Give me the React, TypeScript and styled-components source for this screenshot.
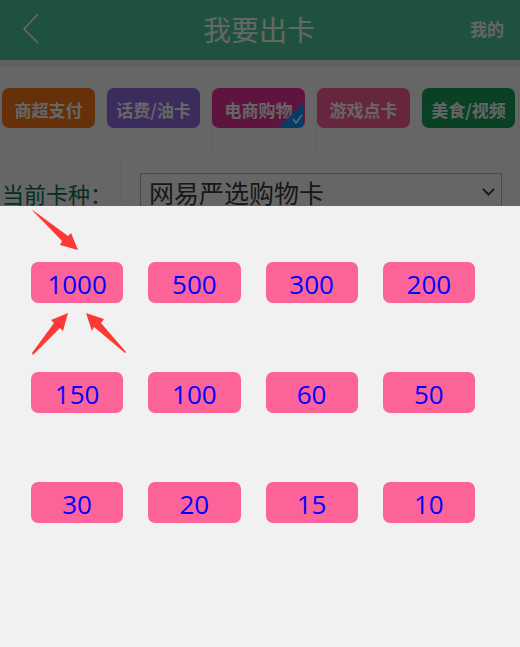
import React, { useState } from "react";
import styled, { createGlobalStyle } from "styled-components";

const GlobalStyle = createGlobalStyle`
  *, *::before, *::after { box-sizing: border-box; }
  body {
    margin: 0;
    background: #fff;
    font-family: "Open Sans", "Noto Sans CJK SC", sans-serif;
  }
  button, select { font-family: inherit; }
`;

const Page = styled.div`
  min-height: 100vh;
`;

const Header = styled.header`
  display: grid;
  grid-template-columns: 1fr auto 1fr;
  align-items: center;
  height: 60px;
  padding: 0 16px 2px 14px;
  background: #4dcd9b;
  color: #fff;
`;

const BackButton = styled.button`
  display: flex;
  justify-self: start;
  padding: 0 0 0 6px;
  border: 0;
  background: none;
  color: inherit;
`;

const Title = styled.h1`
  margin: 0;
  font-family: "Noto Sans CJK SC", sans-serif;
  font-size: 28px;
  line-height: 40px;
  font-weight: 400;
`;

const MineLink = styled.a`
  justify-self: end;
  font-family: "Noto Sans CJK SC", sans-serif;
  font-size: 17px;
  line-height: 24px;
  font-weight: 700;
  color: inherit;
  text-decoration: none;
`;

const Categories = styled.nav`
  display: grid;
  grid-template-columns: repeat(4, 105fr) 98fr;
  padding: 14px 1px 0;
  border-top: 7px solid #f0f0f0;
`;

const CategoryCell = styled.div`
  height: 78px;
  padding: 7px 3px 0 0;
  border-left: 1px solid #f5f5f5;

  &:not(:last-child) { padding-right: 11px; }
  &:last-child { border-right: 1px solid #f5f5f5; }
`;

const CategoryButton = styled.button<{ $color: string }>`
  position: relative;
  display: block;
  width: 100%;
  height: 40px;
  padding: 3px 0 0;
  border: 0;
  border-radius: 7px;
  background: ${({ $color }) => $color};
  color: #fff;
  font-family: "Noto Sans CJK SC", sans-serif;
  font-size: 17px;
  line-height: 37px;
  font-weight: 700;
  white-space: nowrap;
`;

const SelectedMark = styled.svg`
  position: absolute;
  right: 2px;
  bottom: 1px;
`;

const KindRow = styled.div`
  display: grid;
  grid-template-columns: 121px 1fr;
`;

const KindLabel = styled.label`
  padding: 18px 0 0 2px;
  border-right: 1px solid #f5f5f5;
  color: #0c7552;
  font-size: 22px;
  line-height: 34px;
  white-space: nowrap;
`;

const SelectWrap = styled.div`
  position: relative;
  padding: 14px 18px 0 19px;
`;

const KindSelect = styled.select`
  appearance: none;
  width: 100%;
  height: 42px;
  padding: 0 28px 2px 8px;
  border: 1px solid #bbb;
  background: #fff;
  color: #3c3c3c;
  font-size: 25px;
`;

const Chevron = styled.svg`
  position: absolute;
  right: 25px;
  top: 29px;
  pointer-events: none;
`;

const Scrim = styled.div`
  position: fixed;
  inset: 0;
  background: rgba(0, 0, 0, 0.6);
`;

const Sheet = styled.section`
  position: fixed;
  left: 0;
  right: 0;
  bottom: 0;
  padding: 56px 45px 124px 31px;
  background: #f1f1f1;
`;

const Amounts = styled.div`
  display: grid;
  grid-template-columns: repeat(4, 1fr);
  gap: 69px 25px;
`;

const AmountButton = styled.button`
  height: 41px;
  padding: 3px 0 0;
  border: 0;
  border-radius: 7px;
  background: #fc6399;
  color: #00f;
  font-size: 26px;
  line-height: 38px;
`;

const Arrows = styled.svg`
  position: absolute;
  left: 20px;
  top: 0;
  pointer-events: none;
`;

const categories = [
  { name: "商超支付", color: "#ff7819" },
  { name: "话费/油卡", color: "#976ee9" },
  { name: "电商购物", color: "#ee329b" },
  { name: "游戏点卡", color: "#ff609c" },
  { name: "美食/视频", color: "#1aa05a" },
];

const amounts = [1000, 500, 300, 200, 150, 100, 60, 50, 30, 20, 15, 10];

export default function App() {
  const [selected, setSelected] = useState("电商购物");

  return (
    <>
      <GlobalStyle />
      <Page>
        <Header>
          <BackButton aria-label="返回">
            <svg width="22" height="34" viewBox="0 0 22 34" fill="none" stroke="currentColor" strokeWidth="1.6">
              <path d="M18 2 4 17 18 31" />
            </svg>
          </BackButton>
          <Title>我要出卡</Title>
          <MineLink href="#mine">我的</MineLink>
        </Header>
        <Categories>
          {categories.map(({ name, color }) => (
            <CategoryCell key={name}>
              <CategoryButton
                $color={color}
                aria-pressed={selected === name}
                onClick={() => setSelected(name)}
              >
                {name}
                {selected === name && (
                  <SelectedMark width="24" height="24" viewBox="0 0 24 24" aria-hidden="true">
                    <path d="M24 0V24H0Z" fill="#0f96ff" />
                    <path d="m14 16 3 4 6-8" fill="none" stroke="#fff" strokeWidth="1.6" />
                  </SelectedMark>
                )}
              </CategoryButton>
            </CategoryCell>
          ))}
        </Categories>
        <KindRow>
          <KindLabel htmlFor="kind">当前卡种：</KindLabel>
          <SelectWrap>
            <KindSelect id="kind">
              <option>网易严选购物卡</option>
            </KindSelect>
            <Chevron width="13" height="9" viewBox="0 0 13 9" fill="none" stroke="#444" strokeWidth="2">
              <path d="m1 1 5.5 5.5L12 1" />
            </Chevron>
          </SelectWrap>
        </KindRow>
      </Page>
      <Scrim />
      <Sheet role="dialog" aria-label="面值">
        <Amounts>
          {amounts.map((amount) => (
            <AmountButton key={amount}>{amount}</AmountButton>
          ))}
        </Amounts>
        <Arrows width="110" height="154" viewBox="0 0 110 154" fill="#fc3a35" aria-hidden="true">
          <path d="M12 4 14 5 48 30 51 27 58 44 40 39 42 35Z" />
          <path d="M48 107 31 114 34 117 12 147 13 149 40 122 43 125Z" />
          <path d="M66 107 84 113 81 117 106 146 105 147 74 121 72 125Z" />
        </Arrows>
      </Sheet>
    </>
  );
}
